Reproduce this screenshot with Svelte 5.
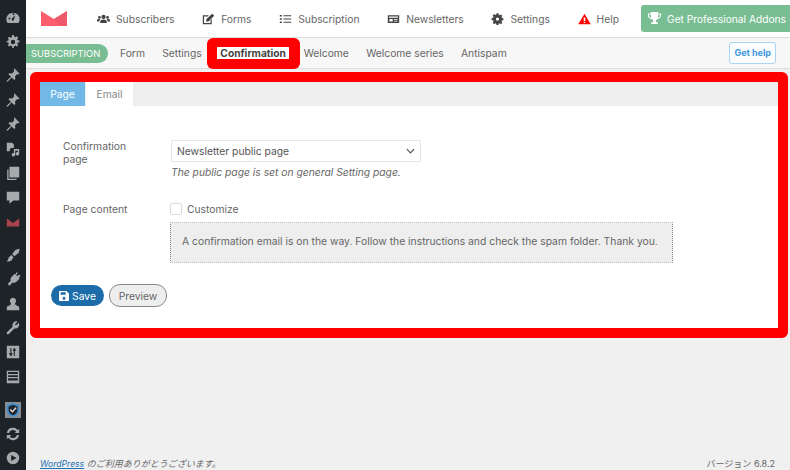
<script>
  const menu = [
    { label: 'Subscribers', icon: 'users' },
    { label: 'Forms', icon: 'edit' },
    { label: 'Subscription', icon: 'list' },
    { label: 'Newsletters', icon: 'news' },
    { label: 'Settings', icon: 'cog' },
    { label: 'Help', icon: 'warn' }
  ];
  const gear = 'M8 1h2l.4 2 1.3.6 1.7-1.100 1.400 1.400-1.100 1.700.6 1.300 2 .4v2l-2 .4-.6 1.300 1.100 1.700-1.400 1.400-1.700-1.100-1.300.6-.4 2H8l-.4-2-1.300-.6-1.700 1.100-1.400-1.400 1.100-1.700-.6-1.300-2-.4V8l2-.4.6-1.300-1.100-1.700 1.400-1.400 1.700 1.100 1.300-.6zM9 6.500a2.500 2.500 0 1 0 0 5 2.500 2.500 0 0 0 0-5z';
  const pin = 'M10.500 1.500l6 6-1.600 1-1-.6-2.600 2.600.3 3-1.200 1.200-3-3-4.200 4.600-1.400.4.4-1.400 4.600-4.200-3-3 1.200-1.200 3 .3 2.600-2.600-.6-1z';
  const sideGroups = [
    [
      { d: 'M9 3a7.500 7.500 0 0 0-7.500 7.500c0 1.600.5 3 1.300 4h12.400c.8-1 1.300-2.400 1.300-4A7.500 7.500 0 0 0 9 3zm0 9a1.500 1.500 0 0 1-1-2.600L11.500 6l-1.400 4.500A1.500 1.500 0 0 1 9 12zM4 9.500a1 1 0 1 1 0 .1zM8.500 4.500a1 1 0 1 1 0 .1z' },
      { d: gear }
    ],
    [
      { d: pin },
      { d: pin },
      { d: pin },
      { d: 'M2 2h6l2 2v4H7.500a2.500 2.500 0 0 0-2 3.500H2zM10 9h6v5.500a2 2 0 1 1-1.500-2V11h-3v4.500a2 2 0 1 1-1.500-2z' },
      { d: 'M5 2h11v12H5zM2.500 5H4v10.500h9V17H2.500z' },
      { d: 'M2 3h14v10H9.500L5 16.500V13H2z' },
      { d: 'M2 5l7 5 7-5v9H2z', tone: 'mail' }
    ],
    [
      { d: 'M16.500 2l-1 4.500-5 4-2.500-2.500 4-5zM7 9l2.500 2.500-2 3.500c-1 1-4 2-5.500 1 1-.5 1.500-2 2-4z' },
      { d: 'M13 1l1.500 1.500-2 2 1.500 1.500 2-2L17.500 5.500l-2 2 1 1-4 4c-1.500 1-3 1-4 .5l-3.500 3.500L3 14.500 6.500 11c-.5-1-.5-2.500.5-4l4-4 1 1z' },
      { d: 'M9 2a3.500 3.500 0 0 1 2.500 6c-.4.5-.3 1.500.5 2l3 1.500c.8.4 1 1 1 2V16H2v-2.500c0-1 .2-1.600 1-2L6 10c.8-.5.9-1.500.5-2A3.500 3.500 0 0 1 9 2z' },
      { d: 'M15.500 3l-3 3h-.5l-.7-.7v-.5l3-3A4.500 4.500 0 0 0 8.500 7.500L2 14a1.500 1.500 0 0 0 2 2l6.500-6.500A4.500 4.500 0 0 0 15.500 3z' },
      { d: 'M2 2h14v14H2zM6 4.500v6H4.200L6.800 14l2-3.500H7.200v-6zm5 9v-6h1.700L10.500 4l-2 3.500h1.300v6z' },
      { d: 'M2 2h14v14H2zm1.500 1.500v2h11v-2zm0 3.500v2h11V7zm0 3.500v2.500h11v-2.500z' }
    ]
  ];
  const sync = 'M9 2a7 7 0 0 1 5.500 2.700L16 3v5h-5l1.700-1.700A4.700 4.700 0 0 0 4.500 8H2.100A7 7 0 0 1 9 2zM2 10h5l-1.700 1.700A4.700 4.700 0 0 0 13.500 10h2.400a7 7 0 0 1-12.400 3.300L2 15z';
  const play = 'M9 2a7 7 0 1 0 0 14A7 7 0 0 0 9 2zM7 5.500L13 9l-6 3.500z';
</script>

<div class="page">
  <aside class="sidebar">
    {#each sideGroups as group}
      <div class="side-group">
        {#each group as item}
          <svg class="side-icon {item.tone ?? ''}" viewBox="0 0 18 18"><path fill-rule="evenodd" d={item.d} /></svg>
        {/each}
      </div>
    {/each}
    <div class="side-group">
      <svg class="side-icon shield" viewBox="0 0 18 18">
        <path d="M9 1l7 2.500v5.500c0 4-3 6.500-7 8-4-1.500-7-4-7-8V3.500z" fill="#3f8ecf" />
        <path d="M9 3.200l5 1.800v4c0 3-2 4.800-5 6-3-1.200-5-3-5-6V5z" fill="#23282d" />
        <path d="M6 8.500l2.300 2.500L12.500 6.500" fill="none" stroke="#ddd" stroke-width="1.600" />
      </svg>
      <svg class="side-icon" viewBox="0 0 18 18"><path fill-rule="evenodd" d={sync} /></svg>
      <svg class="side-icon" viewBox="0 0 18 18"><path fill-rule="evenodd" d={play} /></svg>
    </div>
  </aside>

  <main class="main">
    <header class="topbar">
      <svg class="logo" viewBox="0 0 26 15">
        <path d="M0 0l13 8L26 0v15H0z" fill="#ff5c6c" />
        <path d="M13 8L26 0v15H19z" fill="#ee5a6c" />
      </svg>
      <nav class="menu">
        {#each menu as item}
          <span class="menu-item">
            <svg class="menu-icon" viewBox="0 0 16 14">
              {#if item.icon === 'users'}
                <circle cx="8" cy="4.500" r="2.600" fill="#444" />
                <circle cx="3" cy="5" r="1.700" fill="#444" />
                <circle cx="13" cy="5" r="1.700" fill="#444" />
                <path d="M4 12V10c0-1.500 1.500-2.500 4-2.500s4 1 4 2.500v2zM0 10V8.500C0 7.500 1 7 3 7c.5 0 .8.100 1 .2C3.200 8 3 9 3 10zM16 10V8.500C16 7.500 15 7 13 7c-.5 0-.8.100-1 .2.800.8 1 1.800 1 2.800z" fill="#444" />
              {:else if item.icon === 'edit'}
                <path d="M1 2.500h7.500L7 4H2.500v8h8V8.500L12 7v6.500H1z" fill="#444" />
                <path d="M5.500 7l7-6.500L15 3l-7 7-2.800.3z" fill="#444" />
              {:else if item.icon === 'list'}
                <path d="M1 2h2.500v2H1zM1 6h2.500v2H1zM1 10h2.500v2H1zM5.500 2.300H15v1.400H5.500zM5.500 6.300H15v1.400H5.500zM5.500 10.300H15v1.400H5.500z" fill="#444" />
              {:else if item.icon === 'news'}
                <path fill-rule="evenodd" d="M1 2.500h14v9.500H1zM2.500 4v1.500h11V4zM3 7v3h4V7zm5.500 0v1h4.500V7zm0 2v1h4.500V9z" fill="#444" />
              {:else if item.icon === 'cog'}
                <path fill-rule="evenodd" d="M6.800 0h2.400l.3 1.900 1.200.6 1.600-1.100 1.600 1.700-1 1.500.5 1.300 1.800.3v2.400l-1.800.3-.5 1.300 1 1.500-1.600 1.700-1.600-1.100-1.200.6-.3 1.600H6.800l-.3-1.600-1.200-.6-1.600 1.100-1.600-1.700 1-1.500-.5-1.300L.8 8.100V5.700l1.800-.3.5-1.300-1-1.500 1.600-1.700 1.600 1.100 1.200-.6zM8 5a2 2 0 1 0 0 4 2 2 0 0 0 0-4z" fill="#444" />
              {:else}
                <path fill-rule="evenodd" d="M8 .5l7.700 13H.3zM7 5v4.500h2V5zm0 5.300v1.700h2v-1.700z" fill="#f00" />
              {/if}
            </svg>
            {item.label}
          </span>
        {/each}
      </nav>
      <span class="addons">
        <svg class="trophy" viewBox="0 0 14 14">
          <path fill-rule="evenodd" d="M3 0h8v1.500h3V4c0 2-1.800 3.500-4 3.800-.4.500-.9.900-1.500 1.100v2.100H10.500V13h-7v-2h2V8.900C4.900 8.700 4.400 8.300 4 7.800 1.800 7.500 0 6 0 4V1.500h3zM1.200 2.700V4c0 1 .8 2 2.200 2.400-.3-1-.4-2.300-.4-3.700zm11.600 0H11c0 1.400-.1 2.700-.4 3.700 1.400-.4 2.200-1.400 2.200-2.400z" fill="#fff" />
        </svg>
        Get Professional Addons
      </span>
    </header>

    <div class="subnav">
      <span class="pill">SUBSCRIPTION</span>
      <span class="sub-item">Form</span>
      <span class="sub-item">Settings</span>
      <span class="sub-active"><b>Confirmation</b></span>
      <span class="sub-item">Welcome</span>
      <span class="sub-item">Welcome series</span>
      <span class="sub-item">Antispam</span>
      <span class="get-help">Get help</span>
    </div>

    <section class="frame">
      <div class="tabs">
        <span class="tab on">Page</span>
        <span class="tab">Email</span>
      </div>
      <div class="form">
        <div class="row">
          <div class="label">Confirmation page</div>
          <div class="field">
            <div class="select">
              Newsletter public page
              <svg class="chev" viewBox="0 0 10 6"><path d="M1 1l4 4 4-4" fill="none" stroke="#555" stroke-width="1.300" /></svg>
            </div>
            <em class="hint">The public page is set on general Setting page.</em>
          </div>
        </div>
        <div class="row second">
          <div class="label">Page content</div>
          <div class="field">
            <label class="check"><span class="box"></span>Customize</label>
            <div class="note">A confirmation email is on the way. Follow the instructions and check the spam folder. Thank you.</div>
          </div>
        </div>
        <div class="actions">
          <span class="btn save">
            <svg class="disk" viewBox="0 0 12 12">
              <path fill-rule="evenodd" d="M1 0h8l3 3v8a1 1 0 0 1-1 1H1a1 1 0 0 1-1-1V1a1 1 0 0 1 1-1zm1 1.500v3h6v-3zM6 7a1.800 1.800 0 1 0 0 3.600A1.800 1.800 0 0 0 6 7z" fill="#fff" />
            </svg>
            Save
          </span>
          <span class="btn preview">Preview</span>
        </div>
      </div>
    </section>

    <footer class="footer">
      <span class="thanks"><a href="#top">WordPress</a> のご利用ありがとうございます。</span>
      <span>バージョン 6.8.2</span>
    </footer>
  </main>
</div>

<style>
  :global(body) {
    margin: 0;
    background: #f0f0f1;
  }
  .page {
    display: flex;
    width: 790px;
    height: 470px;
    overflow: hidden;
    font-family: Inter, "Noto Sans CJK JP", sans-serif;
    font-size: 10.3px;
    color: #666;
  }
  .sidebar {
    width: 26px;
    flex: none;
    background: #1d2327;
    display: flex;
    flex-direction: column;
    align-items: center;
    padding-top: 10px;
    box-sizing: border-box;
    gap: 17px;
  }
  .side-group {
    display: flex;
    flex-direction: column;
    gap: 8.4px;
  }
  .side-icon {
    width: 16px;
    height: 16px;
    fill: #a7aaad;
    display: block;
  }
  .side-icon.mail {
    fill: #a8434d;
  }
  .side-icon.shield {
    background: #8a8d90;
  }
  .main {
    flex: 1;
    display: flex;
    flex-direction: column;
    min-width: 0;
  }
  .topbar {
    height: 37px;
    background: #fff;
    border-bottom: 1px solid #ddd;
    display: flex;
    align-items: center;
    padding-left: 15px;
    flex: none;
  }
  .logo {
    width: 26px;
    height: 15px;
    flex: none;
  }
  .menu {
    display: flex;
    margin-left: 30px;
    gap: 27.7px;
  }
  .menu-item {
    display: flex;
    align-items: center;
    gap: 6px;
    white-space: nowrap;
  }
  .menu-icon {
    width: 13px;
    height: 12px;
    flex: none;
  }
  .addons {
    margin-left: 22px;
    width: 149px;
    height: 27px;
    flex: none;
    box-sizing: border-box;
    padding-left: 7px;
    background: #79bd93;
    border-radius: 3px 0 0 3px;
    color: #fff;
    display: flex;
    align-items: center;
    gap: 6px;
    white-space: nowrap;
    font-size: 10.2px;
  }
  .trophy {
    width: 13px;
    height: 13px;
    flex: none;
  }
  .subnav {
    height: 30px;
    flex: none;
    background: #f7f7f7;
    border-bottom: 1px solid #ddd;
    display: flex;
    align-items: center;
  }
  .pill {
    background: #79bd93;
    color: #fff;
    border-radius: 0 10px 10px 0;
    height: 19px;
    line-height: 19px;
    width: 82px;
    box-sizing: border-box;
    padding-left: 5px;
    font-size: 9.4px;
    white-space: nowrap;
    flex: none;
  }
  .sub-item {
    margin-left: 17.3px;
    white-space: nowrap;
  }
  .pill + .sub-item {
    margin-left: 12px;
  }
  .sub-item + .sub-active {
    margin-left: 5px;
  }
  .sub-active + .sub-item {
    margin-left: 4px;
  }
  .sub-active {
    background: #f00;
    border-radius: 6px;
    height: 31px;
    width: 93px;
    display: flex;
    align-items: center;
    justify-content: center;
    flex: none;
  }
  .sub-active b {
    background: #fff;
    color: #444;
    font-size: 10.2px;
    line-height: 12px;
    padding: 0 3px;
  }
  .get-help {
    margin-left: auto;
    margin-right: 14px;
    border: 1px solid #a9d4f2;
    border-radius: 3px;
    color: #3f97dc;
    font-weight: 700;
    font-size: 9px;
    height: 20px;
    line-height: 20px;
    padding: 0 4px;
    background: #fbfdff;
  }
  .frame {
    margin: 3px 2px 0 4px;
    height: 266px;
    box-sizing: border-box;
    border: 10px solid #f00;
    border-radius: 6px;
    background: #fff;
    flex: none;
  }
  .tabs {
    display: flex;
    background: #eee;
    height: 24px;
  }
  .tab {
    width: 47px;
    line-height: 24px;
    text-align: center;
    background: #fff;
    color: #888;
  }
  .tab.on {
    width: 45px;
    margin-right: 1px;
    background: #72b8e6;
    color: #fff;
  }
  .form {
    padding: 34px 11px 0;
  }
  .row {
    display: flex;
  }
  .second {
    margin-top: 24px;
  }
  .label {
    width: 120px;
    box-sizing: border-box;
    padding: 0 40px 0 12px;
    line-height: 13px;
    flex: none;
  }
  .select {
    width: 250px;
    height: 22px;
    box-sizing: border-box;
    border: 1px solid #e6e6e6;
    border-radius: 2px;
    padding-left: 5px;
    display: flex;
    align-items: center;
    justify-content: space-between;
    color: #555;
  }
  .chev {
    width: 9px;
    height: 6px;
    margin-right: 5px;
  }
  .hint {
    display: block;
    margin-top: 4px;
    line-height: 13px;
  }
  .check {
    display: flex;
    align-items: center;
    gap: 5px;
    height: 13px;
    margin-left: -1px;
    margin-top: -1px;
  }
  .box {
    width: 10px;
    height: 10px;
    border: 1px solid #ddd;
    border-radius: 2px;
  }
  .note {
    width: 503px;
    height: 41px;
    margin: 7px 0 0 -1px;
    box-sizing: border-box;
    border: 1px dotted #888;
    border-top-color: #bbb;
    border-bottom-color: #bbb;
    background: #eee;
    padding-left: 11px;
    line-height: 37px;
    white-space: nowrap;
    font-size: 10.35px;
  }
  .actions {
    display: flex;
    align-items: center;
    gap: 5px;
    margin-top: 21px;
  }
  .btn {
    height: 21px;
    border-radius: 11px;
    display: flex;
    align-items: center;
    box-sizing: border-box;
  }
  .save {
    width: 53px;
    background: #1b6ca8;
    color: #fff;
    justify-content: center;
    gap: 3px;
  }
  .disk {
    width: 10px;
    height: 10px;
  }
  .preview {
    width: 58px;
    height: 23px;
    justify-content: center;
    background: #eee;
    border: 1px solid #888;
  }
  .footer {
    margin-top: auto;
    display: flex;
    justify-content: space-between;
    padding: 0 15px 0 14px;
    height: 12px;
    font-size: 9px;
    line-height: 12px;
  }
  .thanks {
    font-style: italic;
  }
  .thanks a {
    color: #2271b1;
    font-size: 8.6px;
  }
</style>
